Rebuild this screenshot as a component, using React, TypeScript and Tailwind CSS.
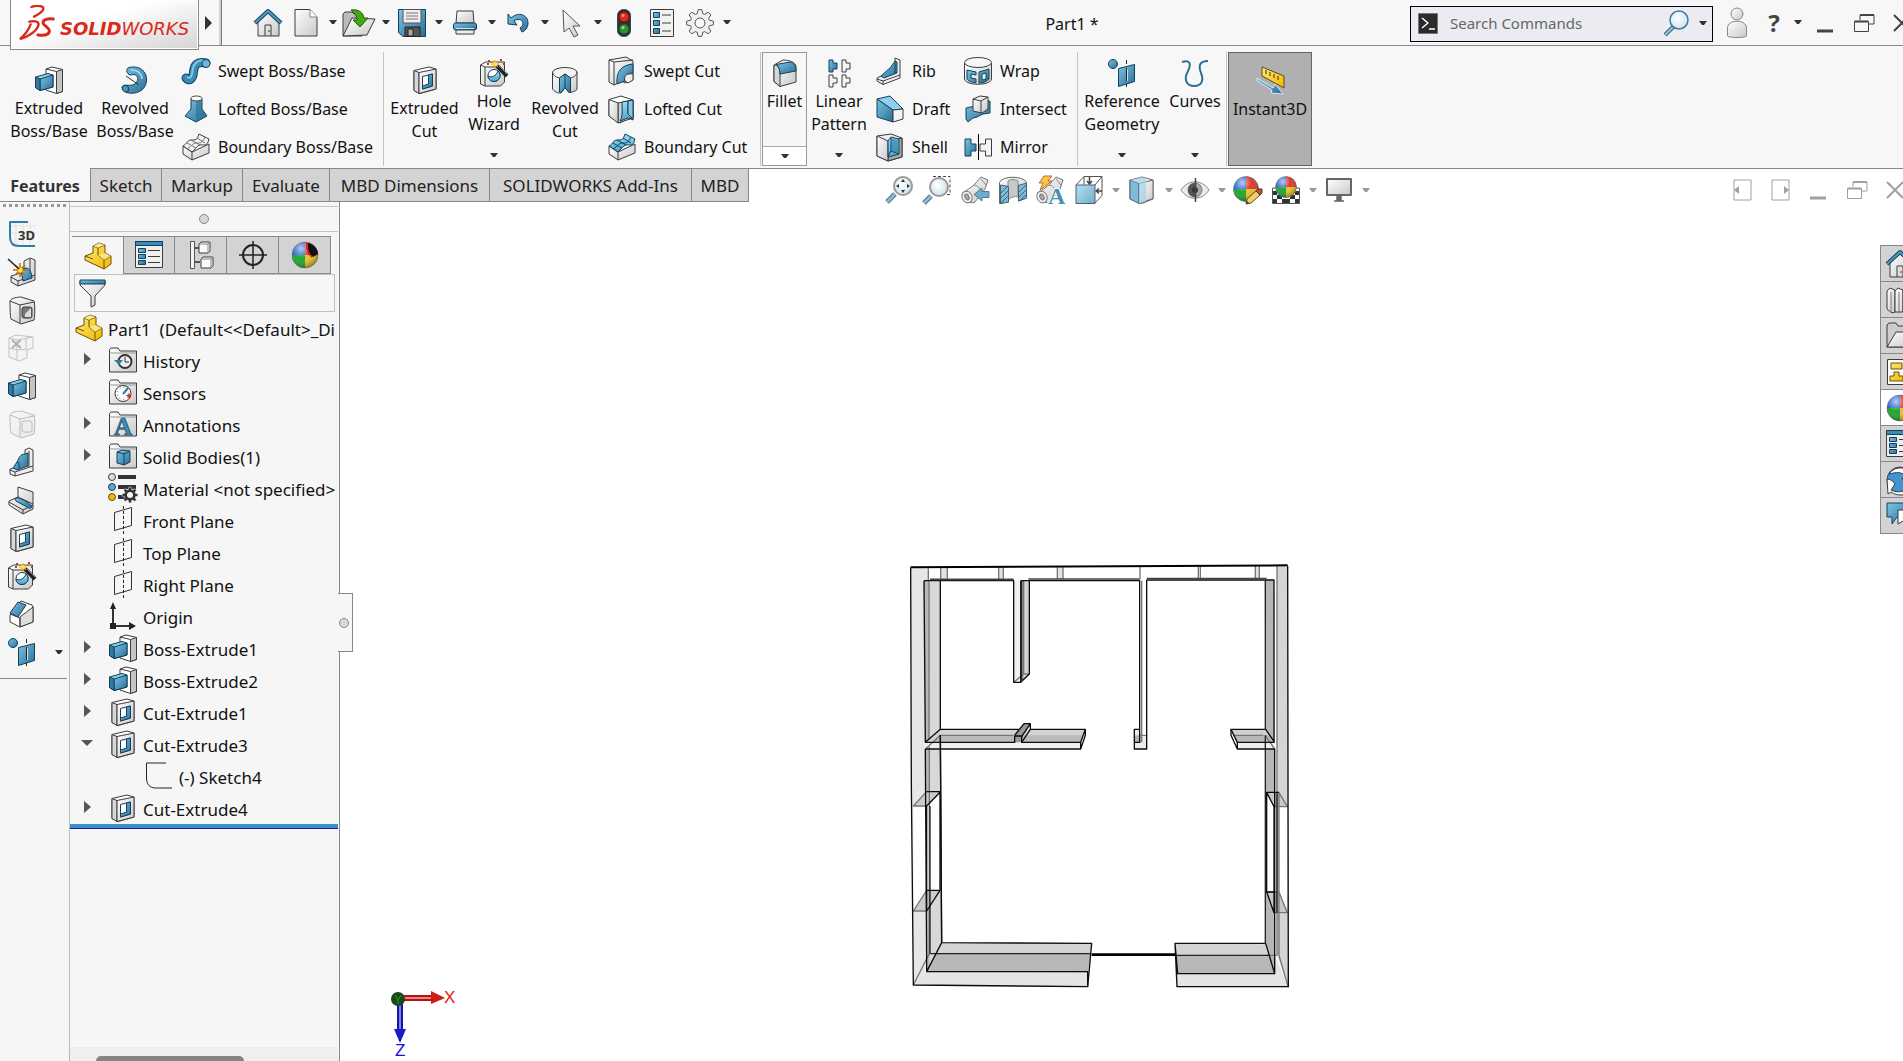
import type { ReactNode } from 'react';

type IconProps = { children: ReactNode; w?: number; h?: number; className?: string };

function Svg({ children, w = 28, h = 28, className = '' }: IconProps) {
  return (
    <svg width={w} height={h} viewBox={`0 0 ${w} ${h}`} fill="none" strokeLinejoin="round" className={`shrink-0 overflow-visible ${className}`} aria-hidden="true">
      {children}
    </svg>
  );
}

// gradients shared by all icons
function Gradients() {
  return (
    <svg width="0" height="0" className="absolute" aria-hidden="true">
      <defs>
        <linearGradient id="blue" x1="0" y1="0" x2="1" y2="1">
          <stop offset="0" stopColor="#7cc4e6" />
          <stop offset="1" stopColor="#2b6d94" />
        </linearGradient>
        <linearGradient id="sky" x1="0" y1="0" x2="0" y2="1">
          <stop offset="0" stopColor="#9adcf8" />
          <stop offset="1" stopColor="#4da3cd" />
        </linearGradient>
        <linearGradient id="pale" x1="0" y1="0" x2="1" y2="1">
          <stop offset="0" stopColor="#b5e2f6" />
          <stop offset="1" stopColor="#72acc8" />
        </linearGradient>
        <linearGradient id="grey" x1="0" y1="0" x2="1" y2="1">
          <stop offset="0" stopColor="#ffffff" />
          <stop offset="1" stopColor="#c9c9c9" />
        </linearGradient>
        <linearGradient id="gold" x1="0" y1="0" x2="1" y2="1">
          <stop offset="0" stopColor="#ffe87a" />
          <stop offset="1" stopColor="#f0b800" />
        </linearGradient>
        <radialGradient id="lens" cx="0.4" cy="0.4" r="0.6">
          <stop offset="0" stopColor="#ffffff" />
          <stop offset="1" stopColor="#cfe3ee" />
        </radialGradient>
        <radialGradient id="shine" cx="0.35" cy="0.25" r="0.75">
          <stop offset="0" stopColor="#ffffff" stopOpacity="0.65" />
          <stop offset="0.5" stopColor="#ffffff" stopOpacity="0" />
          <stop offset="1" stopColor="#000000" stopOpacity="0.3" />
        </radialGradient>
      </defs>
    </svg>
  );
}

const INK = '#3c3c3c';
const NAVY = '#12405a';

const ExtrudeBoss = () => (
  <Svg>
    <path d="M11 3l6-2 10.500 2.500v22l-6 2L11 24z" fill="#fff" stroke={INK} />
    <path d="M21.500 5.500l6-2v22l-6 2z" fill="#c4c4c4" stroke={INK} />
    <path d="M11 3l10.500 2.500" stroke={INK} />
    <path d="M.5 11L13 7.500l5 1.500v12L5 24.500.5 21.500z" fill="#8fd0ee" stroke={NAVY} />
    <path d="M5 13l13-4v12L5 24.500z" fill="url(#blue)" stroke={NAVY} />
    <path d="M.5 11L5 13v11.500L.5 21.500z" fill="#337ba3" stroke={NAVY} />
  </Svg>
);

const RevolveBoss = () => (
  <Svg>
    <path d="M8 1.500C18-1 26.500 5 25.500 15S15 29 5 26.500l-4-5c3-4 8-1 12-3 5-3 5-9 0-10-2 0-3 1-5 0-3-2-3-6 0-7z" fill="url(#blue)" stroke={NAVY} />
    <ellipse cx="4.500" cy="22.500" rx="3" ry="3.500" transform="rotate(-35 4.500 22.500)" fill="#4a94bb" stroke={NAVY} />
    <path d="M10 4c7 0 11 4 11 9" stroke="#a5dbf3" strokeWidth="1.500" />
    <path d="M5 10l13 9" stroke="#333" />
  </Svg>
);

const SweptBoss = () => (
  <Svg>
    <path d="M4 21c3 4 7 1 7.500-6S15 4 24 6" stroke={NAVY} strokeWidth="9" strokeLinecap="round" />
    <path d="M4 21c3 4 7 1 7.500-6S15 4 24 6" stroke="#3b8ab5" strokeWidth="7" strokeLinecap="round" />
    <path d="M5 20c3 2 5 0 5.500-6S15 2 22 4" stroke="#84c8e8" strokeWidth="2" />
    <circle cx="24" cy="6.500" r="4" fill="#6fb9dd" stroke={NAVY} />
  </Svg>
);

const LoftedBoss = () => (
  <Svg>
    <path d="M9 4v10L3 21l11 6 11-6-5-7V4z" fill="url(#blue)" stroke={NAVY} />
    <path d="M14 4v23l11-6-5-7V4z" fill="#2d6f95" opacity=".6" />
    <ellipse cx="14.500" cy="3.500" rx="5.500" ry="2.500" fill="#fff" stroke={INK} />
  </Svg>
);

const Boundary = ({ blue = false }: { blue?: boolean }) => (
  <Svg>
    <path d="M1 13l9 6 17-8v9l-17 7-9-6z" fill="url(#grey)" stroke={INK} />
    <path d="M1 13C5 11 5 7 9 7c5 0 6 0 8-6l10 5c-2 9-6 5-9 6-4 1-5 5-8 7z" fill={blue ? 'url(#sky)' : '#f2f2f2'} stroke={blue ? NAVY : INK} />
    <path d="M5 10l9 5M9 7l9 5M15 5l8 5M5 16c5-3 6-6 9-6s6 1 9-6" stroke={blue ? NAVY : '#777'} />
    <path d="M10 19v8" stroke={INK} />
  </Svg>
);

const ExtrudeCut = () => (
  <Svg>
    <path d="M3 4.500L18 1l7 2v20L9 27.500l-6-3z" fill="#fff" stroke={INK} />
    <path d="M3 4.500l5 2v21l-5-3z" fill="#d8d8d8" stroke={INK} />
    <path d="M8 6.500L25 3v20L8 27.500z" fill="url(#grey)" stroke={INK} />
    <path d="M11.500 10.500l10-2.500v12l-10 3z" fill="#fff" stroke={NAVY} />
    <path d="M17.500 9l4-1v12l-10 3v-3l6-2z" fill="url(#blue)" stroke={NAVY} />
  </Svg>
);

const HoleWizard = () => (
  <Svg>
    <path d="M.5 6l5-3h19v20l-4 4H5l-4.500-2z" fill="url(#grey)" stroke={INK} />
    <path d="M.5 6L5 8v19M5 8h16" stroke={INK} />
    <circle cx="14" cy="16.500" r="6" fill="#fff" stroke={NAVY} />
    <path d="M8 17c4 2 8 0 10-5 4 4 2 10-4 10.500-4 0-6-3-6-5.500z" fill="url(#sky)" stroke={NAVY} />
    <path d="M17 7l10 10" stroke="#222" strokeWidth="4" />
    <path d="M19 7l8 8" stroke="#888" />
    <path d="M15 1v9M11 5h8M12 2l6 6M18 2l-6 6" stroke="#f5a400" />
    <path d="M8 2h2M20 1h2M23 5h2M7 5h2" stroke="#b5421a" strokeWidth="2" />
    <circle cx="15" cy="5" r="2" fill="#ffe23a" />
  </Svg>
);

const RevolveCut = () => (
  <Svg>
    <path d="M1.500 6v17c3 4 7 4.500 9 3.500l3.500-5 4 5c3 0 6-1 8-3V6z" fill="url(#grey)" stroke={INK} />
    <path d="M1.500 6c2-6 23-6 24.500 0-1 4-3 5-6.500 6L14 8l-5.500 4C4 11 2 9 1.500 6z" fill="#f4f4f4" stroke={INK} />
    <path d="M14 8L8.500 12v14l1.500 1 4-5.500 4.500 5.500 1-1V12z" fill="url(#blue)" stroke={NAVY} />
    <path d="M14 8v13.500" stroke={NAVY} />
  </Svg>
);

const SweptCut = () => (
  <Svg>
    <path d="M1 3l17-3 7 4v19l-8 3-3-2-8 4-5-3z" fill="url(#grey)" stroke={INK} />
    <path d="M1 3l5 2v23M6 5l19-2" stroke={INK} />
    <path d="M9 27c-1-12 4-19 16-20v9c-6 0-8 3-8 8z" fill="url(#blue)" stroke={NAVY} />
    <path d="M17 24c-2-6 3-8 8-7v6l-5 3z" fill="#eee" stroke={INK} />
  </Svg>
);

const LoftedCut = () => (
  <Svg>
    <path d="M1 4.500L13 1l12 4v20l-4-2-9 5L1 21z" fill="#fff" stroke={INK} />
    <path d="M10 8L25 5v18l-15 5z" fill="#cfcfcf" stroke={INK} />
    <path d="M1 4.500L10 8v20L1 21z" fill="url(#grey)" stroke={INK} />
    <path d="M14 7l6-1v13l5 5-5-1-8 3c3-5 2-10 2-19z" fill="url(#sky)" stroke={NAVY} />
    <path d="M20 6v13l5 5V5z" fill="#8cc4df" stroke={NAVY} />
  </Svg>
);

const Fillet = () => (
  <Svg>
    <path d="M3 6l9-5c6 0 12 2 13 6v16L9 27.500l-6-5z" fill="url(#grey)" stroke={INK} />
    <path d="M3 6c4 0 6 4 6 8v13.500l-6-5z" fill="#d5d5d5" stroke={INK} />
    <path d="M5 5.500L19 3c4 1 6 4 6 9L9 15c0-4-1-8-4-9.500z" fill="url(#blue)" stroke={NAVY} />
  </Svg>
);

const LinearPattern = () => (
  <Svg>
    <path d="M4 1h4v3h4v6H8v3H4z" fill="url(#blue)" stroke={NAVY} />
    <path d="M17 1h4v3h4v6h-4v3h-4zM4 16h4v3h4v5H8v4H4zM17 16h4v3h4v5h-4v4h-4z" fill="#f4f4f4" stroke={INK} />
  </Svg>
);

const Rib = () => (
  <Svg>
    <path d="M19 1l5 2v18L7 27.500 1 24v-3l4-2 14-5z" fill="#f1f1f1" stroke={INK} />
    <path d="M1 22l6 2 17-6M7 24v3" stroke={INK} />
    <path d="M19 4c-1 2-2 2-4 6L5 19l3 2 13-5V5z" fill="url(#blue)" stroke={NAVY} />
    <path d="M19 5v12" stroke={NAVY} />
  </Svg>
);

const Draft = () => (
  <Svg>
    <path d="M1 4l13-3 13 13-10 1z" fill="#8fd0ee" stroke={NAVY} />
    <path d="M1 4l16 11v12L1 22z" fill="url(#blue)" stroke={NAVY} />
    <path d="M17 15l10-1v10l-10 3z" fill="#f4f4f4" stroke={INK} />
  </Svg>
);

const Shell = () => (
  <Svg>
    <path d="M1 3l14-2 11 4v19l-14 4L1 23z" fill="#eee" stroke={INK} />
    <path d="M12 8l14-3v19l-14 4z" fill="#a5a5a5" stroke={INK} />
    <path d="M1 3l11 5v20L1 23z" fill="url(#grey)" stroke={INK} />
    <path d="M12 8l3-4 8 2v15l-11 3z" fill="url(#sky)" stroke={NAVY} />
    <path d="M15 5v13l-3 5M15 18l8 3" stroke={NAVY} />
    <path d="M15 5l8 2v14l-8-3z" fill="#2f779f" opacity=".6" />
  </Svg>
);

const Wrap = () => (
  <Svg>
    <path d="M.5 6v16c1 7 26 7 27 0V6z" fill="url(#grey)" stroke={INK} />
    <ellipse cx="14" cy="5.500" rx="13.500" ry="5" fill="#f6f6f6" stroke={INK} />
    <path d="M3 13l9 2v3l-5-1v4l5 1v4C7 25 4 24 3 22zM15 15l10-3v10c-2 2-5 4-10 4z" fill="url(#blue)" stroke={NAVY} />
    <path d="M18 17v6l4-1v-6z" fill="#eee" stroke={NAVY} />
  </Svg>
);

const Intersect = () => (
  <Svg>
    <path d="M2 13l9-2 4-4 11-1v12l-7 1-6 3-4 1-5 4-2-3z" fill="url(#blue)" stroke={NAVY} />
    <path d="M9 4l7-3 8 1v12l-6 4-9-2z" fill="url(#grey)" stroke={INK} />
    <path d="M9 4l8 2 7-4M17 6v12" stroke={INK} />
  </Svg>
);

const Mirror = () => (
  <Svg>
    <path d="M1 6h6v5h5v7H7v5H1z" fill="url(#blue)" stroke={NAVY} />
    <path d="M27.500 6h-6v5H16v7h5.500v5h6z" fill="#f4f4f4" stroke={INK} />
    <path d="M14.500 1v26" stroke="#000" />
  </Svg>
);

const RefGeometry = () => (
  <Svg>
    <circle cx="5" cy="5" r="4.500" fill="url(#blue)" stroke={NAVY} />
    <path d="M10.500 9.500l16-4v17l-16 5z" fill="url(#blue)" stroke={NAVY} />
    <path d="M18.500 1v4M18.500 9v13M18.500 25v3" stroke="#222" />
    <path d="M19.500 10v12" stroke="#cde" />
  </Svg>
);

const Curves = () => (
  <Svg>
    <path d="M1 3c9-3 9 3 6 9C2 21 6 27 13 27c8 0 10-6 7-13-3-8-1-12 7-12" stroke="#2f6f95" strokeWidth="2" />
  </Svg>
);

const Instant3D = () => (
  <Svg>
    <path d="M6 0l22 9v12L6 9z" fill="url(#gold)" stroke="#5c4a12" />
    <path d="M10 3v4M14 5v4M18 7v4M22 9v4" stroke="#3a2f0b" />
    <path d="M1 11l16 10 2-4 8 10-12-1 1-3L1 14z" fill="url(#blue)" stroke="#d8e8f0" />
  </Svg>
);

const Sketch3D = () => (
  <Svg>
    <path d="M1 6h27M1 13h27M8 1v26M15 1v26M22 1v26" stroke="#e2e2e2" />
    <path d="M20 2H2v15c0 6 3 9 9 9h16" stroke="#2a7da8" strokeWidth="2" />
    <text x="10" y="20" fontSize="13" fontWeight="700" fill="#333">3D</text>
  </Svg>
);

const WeldBead = () => (
  <Svg>
    <path d="M16 3l6-3 5 2v20L10 28l-7-4v-6l13-4z" fill="url(#grey)" stroke={INK} />
    <path d="M3 19l7 4 17-6M10 23v5M22 1v16" stroke={INK} />
    <path d="M13 12c6-4 10-2 11 8l-9 3z" fill="url(#blue)" stroke={NAVY} />
    <path d="M12 5v14M5 12h14M7 7l10 10M17 7L7 17" stroke="#c4661a" strokeWidth="1.500" />
    <circle cx="12" cy="12" r="3" fill="#ffe23a" stroke="#e08a00" />
    <path d="M0 1l11 10" stroke="#222" strokeWidth="1.500" />
  </Svg>
);

const HoleBox = ({ faded = false }: { faded?: boolean }) => (
  <Svg className={faded ? 'opacity-30' : ''}>
    <path d="M2 5c1-3 8-4 11-4l13 4c1 1 1 17 0 19l-13 4L3 23C2 20 2 8 2 5z" fill="url(#grey)" stroke={INK} />
    <path d="M2 5l10 4v18M12 9l14-3" stroke={INK} />
    <rect x="14" y="11" width="10" height="11" rx="2" fill={faded ? '#ddd' : '#777'} stroke={INK} />
    {!faded && <path d="M17 18l6-6v9h-6z" fill="#ddd" />}
  </Svg>
);

const BlocksX = () => (
  <Svg className="opacity-35">
    <path d="M1 4l7-3 17 2v11l-6 2v8l-8 3-10-4z" fill="#eee" stroke="#666" />
    <path d="M1 4l8 2v20M9 6l16-3M9 16l10-1M1 14l8 2M18 4v11" stroke="#666" />
    <path d="M4 6l9 8M13 6l-9 8" stroke="#333" strokeWidth="2" />
  </Svg>
);

const Gusset = () => (
  <Svg>
    <path d="M17 2l4-2 4 2v21L7 28l-5-2v-5l15-4z" fill="#eee" stroke={INK} />
    <path d="M2 22l5 2 18-6M7 24v4M21 3v16" stroke={INK} />
    <path d="M17 6c-5 0-6 4-8 8l-4 6 4 2 11-4V5z" fill="url(#blue)" stroke={NAVY} />
    <path d="M9 14l2 1v6" stroke={NAVY} />
  </Svg>
);

const FilletBead = () => (
  <Svg>
    <path d="M10 1l15 5v17l-10 5L1 19v-4l9-4z" fill="url(#grey)" stroke={INK} />
    <path d="M1 16l14 8 10-5M15 24v4M10 11l15 7" stroke={INK} />
    <path d="M8 12c3-1 15 5 16 9-2 2-4 1-5 0L8 15c-1-1-1-2 0-3z" fill="url(#blue)" stroke={NAVY} />
  </Svg>
);

const Chamfer = () => (
  <Svg>
    <path d="M2 15L13 1l11 4 1 2v15l-13 5L2 22z" fill="#fff" stroke={INK} />
    <path d="M12 17L25 7v15l-13 5z" fill="#ddd" stroke={INK} />
    <path d="M2 13L10 2l8 3-8 12z" fill="url(#blue)" stroke={NAVY} />
    <path d="M2 14l10 4v9" stroke={INK} />
  </Svg>
);

const Home = () => (
  <Svg>
    <path d="M4 13L14 3l11 10v14H4z" fill="url(#grey)" stroke={INK} />
    <path d="M1 14L14 2l13 12" stroke={NAVY} strokeWidth="4" />
    <path d="M1 14L14 2l13 12" stroke="#4c9cc5" strokeWidth="2" />
    <path d="M11 27V16h6v11M15 21v2" stroke={INK} />
  </Svg>
);

const NewDoc = () => (
  <Svg>
    <path d="M3 .5h15L25 8v19H3z" fill="url(#grey)" stroke={INK} />
    <path d="M18 .5V8h7" fill="#fff" stroke="#888" />
  </Svg>
);

const Open = () => (
  <Svg w={34}>
    <path d="M1 27V5l2-2h7l2 2h8v22z" fill="#bbb" stroke={INK} />
    <path d="M1 27l9-18 23 1-8 16z" fill="url(#grey)" stroke={INK} />
    <path d="M9 1c7-1 12 2 13 8h4l-8 9-7-7h4c0-4-2-7-6-10z" fill="#45a817" stroke="#1e5c05" />
  </Svg>
);

const Save = () => (
  <Svg>
    <path d="M.5.5h27v27H5l-4.500-4z" fill="url(#blue)" stroke={NAVY} />
    <path d="M5 .5h18V14H5z" fill="#eee" stroke="#555" />
    <path d="M8 4h12M8 7h12M8 10h12" stroke="#777" />
    <path d="M7 18h15v9.500H7z" fill="#555" stroke="#222" />
    <path d="M10 20h5v7h-5z" fill="#aaa" stroke="#222" />
  </Svg>
);

const Print = () => (
  <Svg>
    <path d="M6 2h16l1 12H5z" fill="url(#grey)" stroke={INK} />
    <rect x="2.500" y="14" width="23" height="7" rx="2" fill="url(#blue)" stroke={NAVY} />
    <path d="M5 21h18v4H5z" fill="#eee" stroke={INK} />
    <path d="M5 19.500h18" stroke="#bfe6f7" />
  </Svg>
);

const Undo = () => (
  <Svg>
    <path d="M4 5l3 4C15 2 24 6 24 14c0 5-3 8-6 9l-2-4c6-4 2-12-6-7l3 4-9-1z" fill="url(#blue)" stroke={NAVY} />
  </Svg>
);

const Cursor = () => (
  <Svg>
    <path d="M6 1l17 16h-7l5 9-4 2-5-9-5 4z" fill="url(#grey)" stroke="#555" />
  </Svg>
);

const Traffic = () => (
  <Svg>
    <rect x="7.500" y=".5" width="13" height="27" rx="6" fill="#2f2f2f" stroke="#444" />
    <circle cx="14" cy="8" r="5" fill="#d92b20" stroke="#7c120c" />
    <circle cx="14" cy="20" r="5" fill="#2f8f3c" stroke="#14521d" />
    <circle cx="13" cy="6.500" r="1.500" fill="#ff8d80" />
    <circle cx="13" cy="18.500" r="1.500" fill="#8fe09a" />
  </Svg>
);

const Options = () => (
  <Svg>
    <path d="M2.500.5h23v27h-23z" fill="#f1f1f1" stroke={INK} />
    <path d="M5.500 3.500h6v5h-6zM5.500 11.500h6v5h-6zM5.500 19.500h6v5h-6z" fill="url(#blue)" stroke={NAVY} />
    <path d="M14 6h9M14 14h9M14 22h9" stroke={INK} />
  </Svg>
);

function gearPath(cx: number, cy: number, r: number, teeth: number) {
  const pts: string[] = [];
  for (let i = 0; i < teeth; i++) {
    const base = (i * 2 * Math.PI) / teeth - Math.PI / 2;
    const step = Math.PI / teeth;
    [[-0.75, 0.72], [-0.35, 1], [0.35, 1], [0.75, 0.72]].forEach(([a, k]) => {
      pts.push(`${(cx + r * k * Math.cos(base + a * step)).toFixed(1)} ${(cy + r * k * Math.sin(base + a * step)).toFixed(1)}`);
    });
  }
  return `M${pts.join('L')}Z`;
}

const Gear = () => (
  <Svg>
    <path d={gearPath(14, 14, 13.5, 8)} fill="#f1f1f1" stroke="#555" />
    <circle cx="14" cy="14" r="5" fill="#fafafa" stroke="#555" />
  </Svg>
);

const Sphere = ({ x, y, r }: { x: number; y: number; r: number }) => (
  <g>
    <circle cx={x} cy={y} r={r} fill="#2f66d0" />
    <path d={`M${x} ${y}V${y - r}A${r} ${r} 0 0 1 ${x + r} ${y}Z`} fill="#dd3a2e" />
    <path d={`M${x} ${y}H${x + r}A${r} ${r} 0 0 1 ${x} ${y + r}Z`} fill="#e8c22c" />
    <path d={`M${x} ${y}V${y + r}A${r} ${r} 0 0 1 ${x - r} ${y}Z`} fill="#22a62d" />
    <circle cx={x} cy={y} r={r} fill="url(#shine)" stroke="#666" strokeWidth=".5" />
  </g>
);

const ZoomFit = () => (
  <Svg>
    <path d="M2 26l8-8" stroke="#4d7387" strokeWidth="5" />
    <path d="M2 26l8-8" stroke="#8db9d0" strokeWidth="3" />
    <circle cx="18" cy="10" r="9" fill="url(#lens)" stroke="#999" strokeWidth="2" />
    <path d="M18 3l2 3h-4zM18 17l2-3h-4zM11 10l3-2v4zM25 10l-3-2v4z" fill="#333" />
  </Svg>
);

const ZoomArea = () => (
  <Svg>
    <path d="M10 .5h17v18h-5" stroke="#444" strokeDasharray="3 2" />
    <path d="M1 27l7-7" stroke="#4d7387" strokeWidth="5" />
    <path d="M1 27l7-7" stroke="#8db9d0" strokeWidth="3" />
    <circle cx="16" cy="11" r="9" fill="url(#lens)" stroke="#999" strokeWidth="2" />
  </Svg>
);

const Scope = () => (
  <g>
    <path d="M2 17L13 9l7-8 7 3-3 9-10 13c-3 3-12-3-12-9z" fill="url(#grey)" stroke="#777" />
    <path d="M13 9c3 0 6 3 7 7M20 3l5 6" stroke="#888" />
    <ellipse cx="6" cy="21" rx="5" ry="6" transform="rotate(-25 6 21)" fill="#eee" stroke="#777" />
    <ellipse cx="6" cy="21" rx="2" ry="3" transform="rotate(-25 6 21)" fill="#aaa" stroke="#777" />
  </g>
);

const PrevView = () => (
  <Svg>
    <Scope />
    <path d="M28 15.500h-7V12l-8 6.500 8 6.500v-3.500h7z" fill="#6cabca" stroke="#4b7f99" />
  </Svg>
);

const Section = () => (
  <Svg>
    <path d="M.5 6.500C3-.5 25-.5 27.500 6.500V22l-8 3V9l-10 2v15l-9 1.500z" fill="url(#grey)" stroke="#666" />
    <path d="M9 5c2-2 8-2 10 0v16c-3-1-7 0-10 3z" fill="#c8c8c8" stroke="#888" />
    <path d="M1.500 9l8 1.500V26l-8 1.500zM19.500 9.500l8-2.500v15l-8 3z" fill="#7dbbd8" stroke="#44626f" />
    <path d="M2 17l7-7M2 22l7-7M2 27l7-7M20 16l7-7M20 21l7-7M20 25l7-6" stroke="#3a6578" />
  </Svg>
);

const Annotate = () => (
  <Svg w={30}>
    <Scope />
    <path d="M8 0h8l-4 5h4L4 14l3-7H3z" fill="#ffc34a" stroke="#b5722a" />
    <text x="12" y="28" fontSize="24" fontWeight="700" fontFamily="Liberation Serif, serif" fill="#4c8fb1" stroke="#fff" strokeWidth="2" paintOrder="stroke">A</text>
  </Svg>
);

const Orientation = () => (
  <Svg>
    <path d="M1 9L9 .5h18v19L20 27M20 9l7-8.500M9 .5v8" stroke="#555" />
    <path d="M1 9h19v18.500H1z" fill="url(#pale)" stroke="#49606c" />
    <path d="M14.500 1v6M12 5l2.500 3L17 5M27 15h-6M24 12.500l-3 2.500 3 2.500" stroke="#444" strokeWidth="1.500" />
  </Svg>
);

const DisplayStyle = () => (
  <Svg>
    <path d="M2 4l12-3 11 3v19l-11 4.500L2 23z" fill="#f6f6f6" stroke="#667" />
    <path d="M2 4l9 3.500v20L2 23z" fill="#7dbbd8" stroke="#567" />
    <path d="M11 7.500L25 4v18.500l-14 5z" fill="url(#grey)" stroke="#667" />
    <path d="M2 4l12-3 4 1.500v23l-7 2v-20z" fill="#9fd3ea" opacity=".7" />
  </Svg>
);

const Eye = () => (
  <Svg>
    <path d="M0 14C7 3 21 3 28 14 21 25 7 25 0 14z" fill="#ececec" stroke="#888" />
    <circle cx="14" cy="14" r="7" fill="#aaa" stroke="#777" />
    <path d="M14 7a7 7 0 0 0 0 14z" fill="#555" />
    <circle cx="14" cy="14" r="3" fill="#333" />
    <path d="M14.500 2v24" stroke="#444" strokeWidth="1.500" />
  </Svg>
);

const Appearance = () => (
  <Svg w={30}>
    <Sphere x={13} y={13} r={12.5} />
    <path d="M13 28l1-5 9-8 4 4-9 8z" fill="#f4cf62" stroke="#5b4520" />
    <path d="M23 15l2-2h4v4l-2 2z" fill="#c2483c" stroke="#5b3030" />
    <path d="M13 28l1-3 2 2z" fill="#333" />
  </Svg>
);

const Scene = () => (
  <Svg>
    <path d="M.5 12h27v15.500H.5z" fill="#fff" stroke="#555" />
    <path d="M1 15h4v4H1zM23 15h4v4h-4zM5 19h5v4H5zM18 19h5v4h-5zM1 23h4v4H1zM10 23h8v4h-8zM23 23h4v4h-4z" fill="#333" />
    <Sphere x={14} y={11} r={10.5} />
  </Svg>
);

const Monitor = () => (
  <Svg>
    <path d="M2 3h24v16H2z" fill="url(#grey)" stroke="#666" strokeWidth="2" />
    <path d="M12 20h4v4h-4zM9 25h10" fill="#666" stroke="#666" strokeWidth="1.500" />
  </Svg>
);

const PartIcon = () => (
  <Svg>
    <path d="M1 14l8-3V4l6-3 6 2v8l6 3v8l-7 5L1 18z" fill="url(#gold)" stroke="#6b5107" />
    <path d="M9 4l5 2 7-3M14 6v7l6 5 7-4M20 18v9M1 14l8 3" stroke="#6b5107" />
    <path d="M9 4l6-3 6 2-7 3zM14 13l7-2 6 3-7 4z" fill="#fff0a0" opacity=".7" />
  </Svg>
);

const Properties = () => (
  <Svg>
    <path d="M.5.500h27v26H.5z" fill="#efefef" stroke={INK} />
    <path d="M.5.500h27v4H.5z" fill="#3d8cb5" stroke={NAVY} />
    <path d="M3.500 7.500h7v4h-7zM3.500 13.500h7v4h-7zM3.500 19.500h7v4h-7z" fill="url(#blue)" stroke={NAVY} />
    <path d="M13 9.500h12M13 15.500h12M13 21.500h12" stroke={INK} />
  </Svg>
);

const Config = () => (
  <Svg>
    <path d="M3.500.5h4v27h-4z" fill="#f2f2f2" stroke="#555" />
    <path d="M8 7h5M8 21h5" stroke="#555" strokeWidth="2" />
    <path d="M12 3l2-2h9v9l-2 2h-9zM14 18l2-2h10v9l-2 2H14z" fill="#fafafa" stroke={INK} />
    <path d="M12 3h9v9M21 3l2-2M14 18h10v9M24 18l2-2" stroke="#888" />
  </Svg>
);

const DimXpert = () => (
  <Svg>
    <circle cx="14" cy="14" r="10" stroke="#222" strokeWidth="2" />
    <path d="M14 0v28M0 14h28" stroke="#222" strokeWidth="1.500" />
  </Svg>
);

const DisplayManager = () => (
  <Svg>
    <Sphere x={14} y={14} r={13} />
    <path d="M17 2c5 1 10 6 10 11l-5 3c-4-3-6-9-5-14z" fill="#111" />
    <path d="M16 2c-1 5 1 11 5 14" stroke="#c22" strokeWidth="1.500" />
  </Svg>
);

const Funnel = () => (
  <Svg>
    <path d="M1 2h25v4L16 17v9l-4 2V17L1 6z" fill="url(#grey)" stroke={INK} />
    <path d="M1 1h25v4H1z" fill="url(#blue)" stroke={NAVY} />
  </Svg>
);

const Folder = ({ children }: { children: ReactNode }) => (
  <Svg>
    <path d="M.5 26V3.500L2 2h7l2 3h16.500v21z" fill="url(#grey)" stroke={INK} />
    <path d="M.5 7H27" stroke="#999" />
    {children}
  </Svg>
);

const HistoryIcon = () => (
  <Folder>
    <circle cx="16" cy="15.500" r="6.500" fill="#eee" stroke="#333" strokeWidth="2" />
    <path d="M16 11v5h4" stroke="#333" />
    <path d="M5 14h9l-4 5z" fill="#2f7ba3" />
  </Folder>
);

const SensorsIcon = () => (
  <Folder>
    <circle cx="14" cy="15.500" r="8" fill="#fff" stroke="#333" />
    <circle cx="14" cy="15.500" r="6" stroke="#555" strokeDasharray="1 3" />
    <path d="M14 16l5-6" stroke="#2f7ba3" strokeWidth="2" />
    <path d="M17 17l5-1-1 5z" fill="#d22" />
  </Folder>
);

const AnnotationsIcon = () => (
  <Folder>
    <text x="5" y="25" fontSize="25" fontWeight="700" fontFamily="Liberation Serif, serif" fill="#3f8cb4" stroke={NAVY} strokeWidth=".7">A</text>
  </Folder>
);

const BodiesIcon = () => (
  <Folder>
    <path d="M8 10l5-2 8 1v11l-6 3-7-2z" fill="url(#blue)" stroke={NAVY} />
    <path d="M8 10l7 2 6-3M15 12v11" stroke={NAVY} />
  </Folder>
);

const MaterialIcon = () => (
  <Svg w={32} h={30}>
    <path d="M11 4h18M11 14h18M11 24h8" stroke="#333" strokeWidth="4" />
    <circle cx="5" cy="4" r="3.500" fill="#ddd" stroke={INK} />
    <circle cx="5" cy="14" r="3.500" fill="#5aaad0" stroke={NAVY} />
    <circle cx="5" cy="24" r="3.500" fill="#e8bb1c" stroke="#6b5107" />
    <path d={gearPath(23, 22, 8, 8)} fill="#333" stroke="#f6f6f6" strokeWidth=".5" />
    <circle cx="23" cy="22" r="3" fill="#f6f6f6" />
  </Svg>
);

const PlaneIcon = () => (
  <Svg>
    <path d="M5.500 6.500l17-5v18l-17 5z" stroke="#333" />
    <path d="M14.500 0v28" stroke="#222" strokeDasharray="3 2" />
  </Svg>
);

const OriginIcon = () => (
  <Svg>
    <path d="M4 6v18h18" stroke="#333" strokeWidth="2" />
    <path d="M1 7l3-7 3 7zM20 20l7 4-7 4zM1 21h6v6H1z" fill="#222" />
  </Svg>
);

const SketchIcon = () => (
  <Svg>
    <path d="M21 1H1.500v15c0 6 3 10 9 10H27" stroke="#222" />
  </Svg>
);

const Books = () => (
  <Svg>
    <path d="M1 5l3-3 5 2v22l-3 1-5-4z" fill="url(#grey)" stroke={INK} />
    <path d="M9 5l3-3 5 2v22h-8zM17 4l3-3 6 2v23h-9z" fill="url(#grey)" stroke={INK} />
    <path d="M5 6v20M13 6v20" stroke="#777" />
  </Svg>
);

const FileExplorer = () => (
  <Svg>
    <path d="M1 25V3l2-2h7l2 3h16v21z" fill="#ccc" stroke={INK} />
    <path d="M1 25l9-15h20v15z" fill="url(#grey)" stroke={INK} />
  </Svg>
);

const ViewPalette = () => (
  <Svg>
    <path d="M1.500 1.500h25v25h-25z" fill="#fff" stroke={INK} />
    <path d="M5 5h11v6H5zM8 14h5v4h4v5H4v-5h4z" fill="url(#gold)" stroke="#6b5107" />
  </Svg>
);

const ContentGlobe = () => (
  <Svg>
    <circle cx="14" cy="14" r="13" fill="#3f95d0" stroke="#446" />
    <path d="M3 8c4-7 15-8 20-3l3-2v10H16l3-4C13 5 8 7 3 8zM1 13c3 0 6 2 8 5l-4 6c8 4 15 1 19-4l3 2c-4 8-15 9-22 4l-3 2z" fill="#fff" stroke={INK} />
  </Svg>
);

const Forum = () => (
  <Svg>
    <path d="M1 1h24v14H11l-5 7v-7H1z" fill="url(#blue)" stroke={NAVY} />
    <path d="M12 8h18v11H17l-5 3z" fill="#fff" stroke={INK} />
  </Svg>
);

function Caret({ className = 'text-[#333]' }: { className?: string }) {
  return (
    <svg width="8" height="5" viewBox="0 0 8 5" className={`shrink-0 ${className}`} aria-hidden="true">
      <path d="M0 0h8L5 4H3z" fill="currentColor" />
    </svg>
  );
}

type Tool = { name: string; icon: ReactNode; menu?: boolean };

function ToolStrip({ tools, caret }: { tools: Tool[]; caret?: string }) {
  return (
    <div className="flex items-center">
      {tools.map((t) => (
        <div key={t.name} className="flex items-center">
          <button aria-label={t.name} className="flex w-[38px] justify-center">
            {t.icon}
          </button>
          {t.menu && (
            <button aria-label={`${t.name} menu`} className="flex w-[15px] justify-center py-2">
              <Caret className={caret} />
            </button>
          )}
        </div>
      ))}
    </div>
  );
}

const quickTools: Tool[] = [
  { name: 'Home', icon: <Home /> },
  { name: 'New', icon: <NewDoc />, menu: true },
  { name: 'Open', icon: <Open />, menu: true },
  { name: 'Save', icon: <Save />, menu: true },
  { name: 'Print', icon: <Print />, menu: true },
  { name: 'Undo', icon: <Undo />, menu: true },
  { name: 'Select', icon: <Cursor />, menu: true },
  { name: 'Rebuild', icon: <Traffic /> },
  { name: 'File Properties', icon: <Options /> },
  { name: 'Options', icon: <Gear />, menu: true },
];

const viewTools: Tool[] = [
  { name: 'Zoom to Fit', icon: <ZoomFit /> },
  { name: 'Zoom to Area', icon: <ZoomArea /> },
  { name: 'Previous View', icon: <PrevView /> },
  { name: 'Section View', icon: <Section /> },
  { name: 'Dynamic Annotation Views', icon: <Annotate /> },
  { name: 'View Orientation', icon: <Orientation />, menu: true },
  { name: 'Display Style', icon: <DisplayStyle />, menu: true },
  { name: 'Hide/Show Items', icon: <Eye />, menu: true },
  { name: 'Edit Appearance', icon: <Appearance /> },
  { name: 'Apply Scene', icon: <Scene />, menu: true },
  { name: 'View Settings', icon: <Monitor />, menu: true },
];

const sideTools: Tool[] = [
  { name: '3D Sketch', icon: <Sketch3D /> },
  { name: 'Weldment', icon: <WeldBead /> },
  { name: 'Structural Member', icon: <HoleBox /> },
  { name: 'Trim/Extend', icon: <BlocksX /> },
  { name: 'Extruded Boss', icon: <ExtrudeBoss /> },
  { name: 'End Cap', icon: <HoleBox faded /> },
  { name: 'Gusset', icon: <Gusset /> },
  { name: 'Fillet Bead', icon: <FilletBead /> },
  { name: 'Extruded Cut', icon: <ExtrudeCut /> },
  { name: 'Hole Wizard', icon: <HoleWizard /> },
  { name: 'Chamfer', icon: <Chamfer /> },
  { name: 'Reference Geometry', icon: <RefGeometry />, menu: true },
];

function Logo() {
  return (
    <div className="relative z-10 ml-[10px] flex h-[50px] w-[189px] shrink-0 items-center self-start border border-t-0 border-[#8a8a8a] bg-linear-to-br from-white from-40% to-[#d4d4d4] pl-[7px] outline-1 -outline-offset-2 outline-white">
      <svg width="38" height="36" viewBox="0 0 114 108" fill="none" stroke="#da291c" strokeLinecap="round" className="mb-1 shrink-0" aria-hidden="true">
        <path d="M40 6C58 0 78 2 76 12 74 22 60 29 48 35" strokeWidth="7" />
        <path d="M34 50c20-5 32 1 26 14C54 80 28 96 6 102 20 90 32 74 38 58" strokeWidth="7" />
        <path d="M106 42C84 40 72 46 76 56c4 8 20 12 18 24-2 10-18 12-34 10" strokeWidth="9" />
      </svg>
      <span className="ml-1 mt-2 font-['DejaVu_Sans',sans-serif] text-lg font-bold italic text-[#da291c]">
        SOLID<span className="font-extralight">WORKS</span>
      </span>
    </div>
  );
}

function WindowButtons({ small = false }: { small?: boolean }) {
  return (
    <div className={`flex items-center ${small ? 'text-[#a0a0a0]' : 'text-[#444]'}`}>
      <button aria-label="Minimize" className="w-[37px]">
        <Svg w={18} h={20}>
          <path d="M0 18h16" stroke="currentColor" strokeWidth="3" />
        </Svg>
      </button>
      <button aria-label="Restore" className="w-[39px]">
        <Svg w={21} h={20}>
          <path d="M6 7V2h14v9h-5" stroke="currentColor" />
          <path d="M.5 8.500h14v10H.5z" stroke="currentColor" />
          <path d="M6 2h14M.5 8.500h14" stroke="currentColor" strokeWidth="2" />
        </Svg>
      </button>
      <button aria-label="Close" className={`overflow-hidden ${small ? 'w-[17px]' : 'w-[10px]'}`}>
        <Svg w={18} h={20}>
          <path d="M1 2l16 16M17 2L1 18" stroke="currentColor" strokeWidth="2" />
        </Svg>
      </button>
    </div>
  );
}

function TitleBar() {
  return (
    <header className="flex h-[46px] shrink-0 items-center border-b border-[#888] bg-[#f7f7f7]">
      <Logo />
      <button aria-label="Show menu" className="flex w-5 justify-center">
        <Svg w={8} h={14}>
          <path d="M0 0l7 7-7 7z" fill="#333" />
        </Svg>
      </button>
      <div className="mr-[27px] h-full w-[3px] border-r border-[#777] bg-[#d0d0d0]" />
      <ToolStrip tools={quickTools} />
      <h1 className="flex-1 pt-[2px] text-center text-base leading-5">Part1 *</h1>
      <form className="mt-[2px] flex h-9 w-[303px] shrink-0 items-center border border-black bg-[#eaecf1] pl-[7px]">
        <Svg w={20} h={21}>
          <path d="M.5.500h19v20H.5z" fill="#2b2b2b" stroke="#777" />
          <path d="M4 5l6 5-6 5M11 16h6" stroke="#fff" strokeWidth="1.500" />
        </Svg>
        <input
          aria-label="Search Commands"
          placeholder="Search Commands"
          className="ml-3 w-[213px] bg-transparent text-[15px] placeholder-[#666] outline-none"
        />
        <button type="button" aria-label="Search">
          <Svg w={26} h={27}>
            <path d="M2 25l9-9" stroke="#2f5f7d" strokeWidth="4" />
            <path d="M2 25l9-9" stroke="#9cc8de" strokeWidth="2" />
            <circle cx="16" cy="10" r="9" fill="url(#lens)" stroke="#3c7ba0" strokeWidth="1.500" />
          </Svg>
        </button>
        <button type="button" aria-label="Search options" className="ml-2.5">
          <Caret />
        </button>
      </form>
      <div className="ml-[14px] flex w-[90px] shrink-0 items-center">
        <button aria-label="Account">
          <Svg w={20} h={32}>
            <path d="M.5 29V21c0-9 19-9 19 0v8c-2 2-17 2-19 0z" fill="url(#grey)" stroke="#888" />
            <circle cx="10" cy="7" r="6" fill="url(#grey)" stroke="#888" />
          </Svg>
        </button>
        <button aria-label="Help" className="ml-[17px] w-5 text-2xl font-bold text-[#444]">?</button>
        <button aria-label="Help menu" className="ml-2.5">
          <Caret />
        </button>
      </div>
      <WindowButtons />
    </header>
  );
}

type BigProps = { label: string[]; icon: ReactNode; width: string; menu?: boolean };

function BigButton({ label, icon, width, menu = false }: BigProps) {
  return (
    <button className={`flex h-[114px] shrink-0 flex-col items-center text-base leading-[23px] ${menu ? 'pt-[7px]' : 'pt-[14px]'} ${width}`}>
      {icon}
      <span className="mt-[3px] whitespace-nowrap">
        {label.map((l) => (
          <span key={l} className="block">{l}</span>
        ))}
      </span>
      {menu && (
        <span className="mb-2 mt-auto">
          <Caret />
        </span>
      )}
    </button>
  );
}

function ButtonList({ items, width }: { items: [string, ReactNode][]; width: string }) {
  return (
    <div className={`flex shrink-0 flex-col ${width}`}>
      {items.map(([label, icon]) => (
        <button key={label} className="flex h-[38px] items-center gap-2 whitespace-nowrap text-base">
          {icon}
          {label}
        </button>
      ))}
    </div>
  );
}

const Divider = () => <div className="mx-px h-[114px] w-px shrink-0 bg-[#c4c4c4]" />;

function Ribbon() {
  return (
    <div className="flex h-[122px] shrink-0 items-start bg-[#f7f7f7] pl-[6px] pt-[6px]">
      <BigButton label={['Extruded', 'Boss/Base']} icon={<ExtrudeBoss />} width="w-[86px]" />
      <BigButton label={['Revolved', 'Boss/Base']} icon={<RevolveBoss />} width="w-[86px]" />
      <ButtonList
        width="ml-1 w-[200px]"
        items={[['Swept Boss/Base', <SweptBoss />], ['Lofted Boss/Base', <LoftedBoss />], ['Boundary Boss/Base', <Boundary />]]}
      />
      <Divider />
      <BigButton label={['Extruded', 'Cut']} icon={<ExtrudeCut />} width="w-[79px]" />
      <BigButton label={['Hole', 'Wizard']} icon={<HoleWizard />} width="w-[60px]" menu />
      <BigButton label={['Revolved', 'Cut']} icon={<RevolveCut />} width="w-[82px]" />
      <ButtonList
        width="ml-[2px] w-[151px]"
        items={[['Swept Cut', <SweptCut />], ['Lofted Cut', <LoftedCut />], ['Boundary Cut', <Boundary blue />]]}
      />
      <Divider />
      <div className="border border-[#999] bg-linear-to-b from-[#f7f7f7] from-83% to-white to-83%">
        <button className="flex h-[112px] w-[43px] flex-col items-center pt-[6px] text-base leading-[23px]">
          <Fillet />
          <span className="mt-[3px]">Fillet</span>
          <span className="mt-auto flex h-[19px] w-full items-center justify-center border-t border-[#aaa]">
            <Caret />
          </span>
        </button>
      </div>
      <BigButton label={['Linear', 'Pattern']} icon={<LinearPattern />} width="w-[64px]" menu />
      <ButtonList width="ml-[5px] w-[88px]" items={[['Rib', <Rib />], ['Draft', <Draft />], ['Shell', <Shell />]]} />
      <ButtonList width="w-[112px]" items={[['Wrap', <Wrap />], ['Intersect', <Intersect />], ['Mirror', <Mirror />]]} />
      <Divider />
      <BigButton label={['Reference', 'Geometry']} icon={<RefGeometry />} width="w-[86px]" menu />
      <BigButton label={['Curves']} icon={<Curves />} width="w-[60px]" menu />
      <Divider />
      <BigButton label={['Instant3D']} icon={<Instant3D />} width="w-[84px] border border-[#666] bg-[#b0b0b0]" />
    </div>
  );
}

const tabs: [string, string][] = [
  ['Sketch', 'w-[71px]'],
  ['Markup', 'w-[81px]'],
  ['Evaluate', 'w-[87px]'],
  ['MBD Dimensions', 'w-[160px]'],
  ['SOLIDWORKS Add-Ins', 'w-[202px]'],
  ['MBD', 'w-[57px]'],
];

function TabRow() {
  return (
    <div className="z-10 flex h-[34px] shrink-0">
      <button className="w-[90px] shrink-0 border-b border-[#888] bg-[#f7f7f7] pt-[2px] text-base font-bold text-[#333]">Features</button>
      <div className="flex shrink-0 border-y border-l border-[#888]">
        {tabs.map(([name, width]) => (
          <button key={name} className={`border-r border-[#888] bg-[#d3d3d3] pt-px whitespace-nowrap text-[17px] text-[#222] ${width}`}>
            {name}
          </button>
        ))}
      </div>
      <div className="flex h-[43px] flex-1 items-center border-t border-[#888] pl-[131px]">
        <ToolStrip tools={viewTools} caret="text-[#999]" />
        <div className="ml-auto flex items-center text-[#a0a0a0]">
          <button aria-label="Previous pane" className="w-[38px]">
            <Svg w={19} h={22}>
              <path d="M1 1h17v20H1z" stroke="currentColor" />
              <path d="M6 7v8l-5-4z" fill="currentColor" />
            </Svg>
          </button>
          <button aria-label="Next pane" className="w-[39px]">
            <Svg w={19} h={22}>
              <path d="M1 1h17v20H1z" stroke="currentColor" />
              <path d="M13 7v8l5-4z" fill="currentColor" />
            </Svg>
          </button>
          <WindowButtons small />
        </div>
      </div>
    </div>
  );
}

function SideToolbar() {
  return (
    <aside className="w-[69px] shrink-0 bg-[#f6f6f6]">
      <div className="mx-[3px] mt-[2px] border-t-3 border-dotted border-[#999]" />
      <div className="mr-[2px] border-b border-[#888] pb-[7px] pl-[3px] pt-2">
        {sideTools.map((t) => (
          <div key={t.name} className="flex h-[38px] items-center">
            <button aria-label={t.name} className="flex w-[38px] justify-center">
              {t.icon}
            </button>
            {t.menu && (
              <button aria-label={`${t.name} menu`} className="ml-[14px]">
                <Caret />
              </button>
            )}
          </div>
        ))}
      </div>
    </aside>
  );
}

type Node = { label: string; icon: ReactNode; arrow?: 'right' | 'down'; child?: boolean };

const nodes: Node[] = [
  { label: 'History', icon: <HistoryIcon />, arrow: 'right' },
  { label: 'Sensors', icon: <SensorsIcon /> },
  { label: 'Annotations', icon: <AnnotationsIcon />, arrow: 'right' },
  { label: 'Solid Bodies(1)', icon: <BodiesIcon />, arrow: 'right' },
  { label: 'Material <not specified>', icon: <MaterialIcon /> },
  { label: 'Front Plane', icon: <PlaneIcon /> },
  { label: 'Top Plane', icon: <PlaneIcon /> },
  { label: 'Right Plane', icon: <PlaneIcon /> },
  { label: 'Origin', icon: <OriginIcon /> },
  { label: 'Boss-Extrude1', icon: <ExtrudeBoss />, arrow: 'right' },
  { label: 'Boss-Extrude2', icon: <ExtrudeBoss />, arrow: 'right' },
  { label: 'Cut-Extrude1', icon: <ExtrudeCut />, arrow: 'right' },
  { label: 'Cut-Extrude3', icon: <ExtrudeCut />, arrow: 'down' },
  { label: '(-) Sketch4', icon: <SketchIcon />, child: true },
  { label: 'Cut-Extrude4', icon: <ExtrudeCut />, arrow: 'right' },
];

const managerTabs: [string, ReactNode][] = [
  ['PropertyManager', <Properties />],
  ['ConfigurationManager', <Config />],
  ['DimXpertManager', <DimXpert />],
  ['DisplayManager', <DisplayManager />],
];

const Knob = () => <span className="block size-[10px] rounded-full border border-[#888] bg-[#d8d8d8]" />;

function FeatureTree() {
  return (
    <aside className="relative z-10 flex w-[271px] shrink-0 flex-col border-l border-r border-l-[#bbb] border-r-[#888] bg-[#f6f6f6] pr-px">
      <div className="mt-1 flex h-[26px] items-center justify-center border-y border-[#c4c4c4]">
        <Knob />
      </div>
      <div className="mt-1 flex h-[38px] shrink-0 pl-[2px]">
        <button aria-label="FeatureManager" className="flex w-[51px] items-center justify-center border-t border-[#888]">
          <PartIcon />
        </button>
        {managerTabs.map(([name, icon], i) => (
          <button
            key={name}
            aria-label={name}
            className={`flex w-[52px] items-center justify-center border-y border-r border-[#888] bg-[#d3d3d3] ${i === 0 ? 'border-l' : ''}`}
          >
            {icon}
          </button>
        ))}
      </div>
      <div className="ml-1 mr-[3px] flex h-[38px] shrink-0 items-center border border-[#c0c0c0] pl-[4px]">
        <button aria-label="Filter">
          <Funnel />
        </button>
      </div>
      <div className="flex h-8 items-center gap-[5px] whitespace-pre pl-[5px] text-[17px] leading-6">
        <PartIcon />
        <span className="pt-[3px]">Part1  (Default&lt;&lt;Default&gt;_Di</span>
      </div>
      <ul>
        {nodes.map((n) => (
          <li key={n.label} className={`flex h-8 items-center ${n.child ? 'pl-9' : ''}`}>
            <span className="flex w-[38px] shrink-0 justify-center pb-[3px] pr-1">
              {n.arrow === 'right' && (
                <Svg w={7} h={12}>
                  <path d="M0 0l7 6-7 6z" fill="#555" />
                </Svg>
              )}
              {n.arrow === 'down' && (
                <Svg w={12} h={6}>
                  <path d="M0 0h12L6 6z" fill="#555" />
                </Svg>
              )}
            </span>
            <span className="flex w-[30px] shrink-0 justify-center">{n.icon}</span>
            <span className="ml-[5px] whitespace-nowrap pt-[3px] text-[17px] leading-6">{n.label}</span>
          </li>
        ))}
      </ul>
      <div className="h-[5px] shrink-0 border-b border-[#1c1ca8] bg-[#3a8fc8]" />
      <div className="mt-auto flex h-4 items-end border-t border-white bg-[#efefef] pl-[26px]">
        <div className="h-[5px] w-[148px] rounded-t-full bg-[#858585]" />
      </div>
      <div className="absolute -right-[14px] top-[391px] flex h-[59px] w-[15px] items-center border border-l-0 border-[#888] bg-[#f6f6f6] pl-px">
        <Knob />
      </div>
    </aside>
  );
}

// floor plan walls seen from above, drawn at three units to the pixel
function Model() {
  return (
    <svg width="400" height="450" viewBox="0 0 1200 1350" fill="none" strokeLinejoin="round" className="absolute left-[560px] top-[348px]" role="img" aria-label="Part model">
      <path d="M32 52H85V92H72L76 577V1266L40 1305z" fill="#e6e6e6" />
      <path d="M40 1305L78 1265L563 1267V1310z" fill="#e4e4e4" />
      <path d="M72 92H121V538L76 577zM76 597L121 556L125 1178L80 1265z" fill="#d8d8d8" />
      <path d="M72 92H87V567L76 577zM76 597L88 586V1250L80 1265z" fill="#b8b8b8" />
      <path d="M121 538H556L542 577H76z" fill="#d2d2d2" />
      <path d="M121 556H550L542 577H98z" fill="#bababa" />
      <path d="M76 577H542V597H76z" fill="#f0f0f0" />
      <path d="M125 1178L575 1180L563 1267L80 1265z" fill="#d4d4d4" />
      <path d="M107 1211H570L563 1267L80 1265z" fill="#b8b8b8" />
      <path d="M1131 48H1163L1165 1312L1131 1216z" fill="#d5d5d5" />
      <path d="M831 1270H1124V1216L1165 1312H831z" fill="#e4e4e4" />
      <path d="M1094 90H1122L1124 577L1097 538zM1096 556L1124 597V1271L1097 1183z" fill="#b6b6b6" />
      <path d="M825 1180L1097 1183L1124 1271L833 1270z" fill="#d4d4d4" />
      <path d="M828 1216H1108L1124 1271L833 1270z" fill="#b8b8b8" />
      <path d="M993 538H1097L1124 577H1012z" fill="#d0d0d0" />
      <path d="M1000 556H1108L1124 577H1012z" fill="#b8b8b8" />
      <path d="M1012 577H1124V597H1012z" fill="#efefef" />
      <path d="M341 92H362V397H341z" fill="#f1f1f1" />
      <path d="M362 92H388V372L362 397z" fill="#d5d5d5" />
      <path d="M362 92H371V388L362 397z" fill="#b5b5b5" />
      <path d="M122 52H142V90H122zM296 52H310V90H296zM472 52H489V88H472zM1066 50H1078V88H1066z" fill="#e2e2e2" />
      <path d="M703 538H721V556H742V597H703z" fill="#ececec" />
      <path d="M703 556H721V577H703z" fill="#b5b5b5" />
      <path d="M344 556L372 521H391L365 560V577H344z" fill="#999" />
      <path d="M40 768H78V1083H40zM80 768L120 727V1021L80 1083zM1137 770H1162V1088H1137zM1100 728L1122 770V1088L1100 1026z" fill="#fff" />
      <path d="M40 768L80 725H120L80 768zM40 1083L80 1021H120L80 1083z" fill="#ccc" />
      <path d="M1100 727H1137L1162 770H1122zM1100 1026H1137L1162 1088H1122z" fill="#c8c8c8" />

      <g stroke="#777" strokeWidth="4">
        <path d="M85 55V90M122 52V90M142 52V90M296 52V88M310 52V88M472 52V88M489 52V88M720 50V88M895 50V86M901 50V86M1066 48V86M1078 48V86M1131 48V1216" />
        <path d="M87 92V570M88 590V1211L40 1305M76 597L121 556M98 577L121 556H340M371 92V372H388M341 397L371 372M721 556H742M1000 556H1090M1096 556L1124 597" />
        <path d="M80 725L40 768H78M80 1021L40 1083H78M1122 770H1162L1137 728V1216L1165 1312M1122 1088H1162L1137 1026H1100" />
        <path d="M725 92V577M1131 1216H1097" />
      </g>
      <g stroke="#222" strokeWidth="4">
        <path d="M91 1211H573M828 1216H1108M90 768V1211M1131 730V1088" />
        <path d="M362 92V397M365 92V390M1096 92V538M1096 556V1183M121 556L125 1178" />
      </g>
      <g stroke="#0c0c0c" strokeWidth="4">
        <path d="M32 52L34 700L40 1305L563 1310L575 1180L125 1178L121 556" />
        <path d="M72 92H341V397H362L388 372V92M362 92H719V577M740 90V597H703V538H719M703 577H721M740 90H1122V577H1012L993 538H1097L1124 577" />
        <path d="M72 92L76 577H344V558H365V577H542L556 538H391M121 92V538L76 577M121 538H356M76 597H542L556 556V538M542 577V597" />
        <path d="M344 556L372 521H391L365 560M391 521V538L365 577" />
        <path d="M76 597L80 1265H563V1310M80 1265L125 1178" />
        <path d="M993 538V556L1012 597H1124V1271H833L825 1180H1097L1124 1271M1012 577V597M825 1180L831 1310H1165L1163 48" />
        <path d="M80 725H120V1021H80M120 727L80 768V1083L120 1021M1137 727H1100V1026L1122 1088V770L1100 727M1100 1026H1122" />
      </g>
      <path d="M32 52L1163 46" stroke="#000" strokeWidth="6" />
      <path d="M575 1214H826" stroke="#000" strokeWidth="8" />
      <path d="M90 88H341M385 87H719M740 86H1100" stroke="#444" strokeWidth="5" />
    </svg>
  );
}

function Triad() {
  return (
    <svg width="76" height="70" viewBox="0 0 76 70" fill="none" className="absolute bottom-[3px] left-[50px] overflow-visible font-['Liberation_Sans',sans-serif]" role="img" aria-label="Axes">
      <path d="M10 15v27" stroke="#1515a0" strokeWidth="6" />
      <path d="M10 15v27" stroke="#7f7fff" strokeWidth="2" />
      <path d="M4 41h12l-6 14z" fill="#1a1ac8" />
      <path d="M14 10h28" stroke="#b01515" strokeWidth="6" />
      <path d="M14 10h28" stroke="#f08080" strokeWidth="2" />
      <path d="M41 3l14 7-14 6z" fill="#d01a1a" />
      <circle cx="8" cy="11" r="7" fill="#1b451b" />
      <text x="4" y="16" fontSize="12" fill="#129a12">Y</text>
      <text x="54" y="15" fontSize="17" fill="#e11">X</text>
      <text x="5" y="68" fontSize="17" fill="#11d">Z</text>
    </svg>
  );
}

const taskTabs: [string, ReactNode][] = [
  ['Resources', <Home />],
  ['Design Library', <Books />],
  ['File Explorer', <FileExplorer />],
  ['View Palette', <ViewPalette />],
  ['Appearances', <Svg><Sphere x={14} y={14} r={13} /></Svg>],
  ['Custom Properties', <Properties />],
  ['3DEXPERIENCE', <ContentGlobe />],
  ['Forum', <Forum />],
];

function Viewport() {
  return (
    <main className="relative flex flex-1 justify-end overflow-hidden bg-white">
      <Model />
      <Triad />
      <nav className="relative mt-[43px] w-[23px] self-start border-l border-t border-[#888]">
        {taskTabs.map(([name, icon]) => (
          <button
            key={name}
            aria-label={name}
            className={`flex h-9 w-full items-center overflow-hidden border-b border-[#888] pl-[5px] ${name === 'Appearances' ? 'bg-white' : 'bg-[#d3d3d3]'}`}
          >
            {icon}
          </button>
        ))}
      </nav>
    </main>
  );
}

export default function App() {
  return (
    <div className="flex h-screen flex-col overflow-hidden bg-white font-['Noto_Sans',sans-serif] text-[#111]">
      <Gradients />
      <TitleBar />
      <Ribbon />
      <TabRow />
      <div className="flex min-h-0 flex-1">
        <SideToolbar />
        <FeatureTree />
        <Viewport />
      </div>
    </div>
  );
}
